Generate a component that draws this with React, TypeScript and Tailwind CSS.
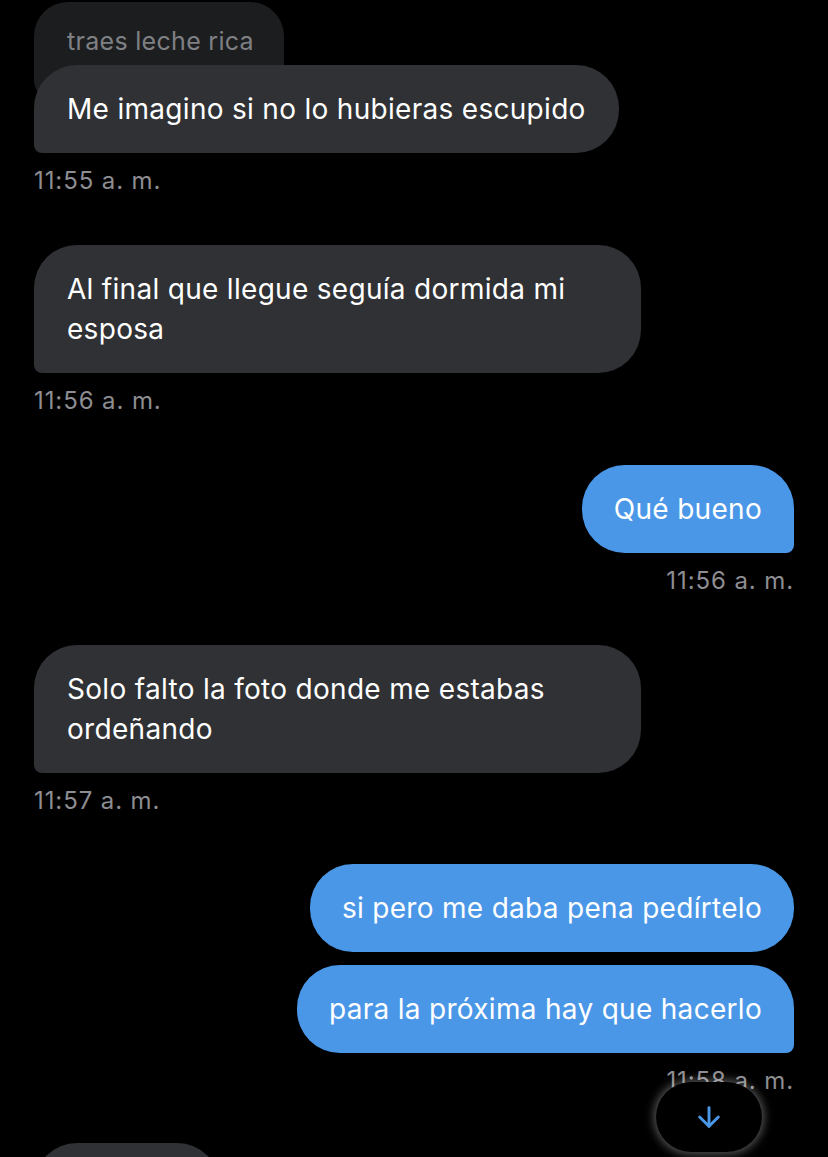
import { ArrowDown } from "lucide-react";

type Msg = { text: string; time?: string; last?: boolean };

function Received({ text, last = true }: Msg) {
  return (
    <div
      className={`w-fit max-w-[607px] bg-[#2f3134] px-[33px] py-[24px] text-[28px] leading-[40px] tracking-[0.3px] text-white rounded-[43px] ${
        last ? "rounded-bl-[8px]" : ""
      }`}
    >
      {text}
    </div>
  );
}

function Sent({ text, last = true }: Msg) {
  return (
    <div
      className={`ml-auto w-fit max-w-[607px] bg-[#4a97e8] px-[32px] py-[24px] text-[28px] leading-[40px] tracking-[0.3px] text-white rounded-[43px] ${
        last ? "rounded-br-[8px]" : ""
      }`}
    >
      {text}
    </div>
  );
}

function Time({ time, right = false }: { time: string; right?: boolean }) {
  return (
    <div
      className={`mt-[14px] text-[24px] leading-[28px] tracking-[0.9px] text-[#8d8d92] ${
        right ? "text-right" : ""
      }`}
    >
      {time}
    </div>
  );
}

export default function App() {
  return (
    <div
      className="relative h-[1157px] w-[828px] overflow-hidden bg-black px-[34px] pt-[2px]"
      style={{ fontFamily: "Inter, 'Noto Sans', sans-serif" }}
    >
      {/* quoted reply */}
      <div className="w-[250px] whitespace-nowrap rounded-t-[34px] rounded-b-[20px] bg-[#1c1d1f] px-[33px] pt-[20px] pb-[40px] text-[25px] leading-[38px] tracking-[0.3px] text-[#7f8084]">
        traes leche rica
      </div>
      <div className="relative -mt-[35px]">
        <Received text="Me imagino si no lo hubieras escupido" />
      </div>
      <Time time="11:55 a. m." />

      <div className="mt-[50px]">
        <Received text="Al final que llegue seguía dormida mi esposa" />
      </div>
      <Time time="11:56 a. m." />

      <div className="mt-[50px]">
        <Sent text="Qué bueno" />
      </div>
      <Time time="11:56 a. m." right />

      <div className="mt-[50px]">
        <Received text="Solo falto la foto donde me estabas ordeñando" />
      </div>
      <Time time="11:57 a. m." />

      <div className="mt-[49px] flex flex-col gap-[13px]">
        <Sent text="si pero me daba pena pedírtelo" last={false} />
        <Sent text="para la próxima hay que hacerlo" />
      </div>
      <Time time="11:58 a. m." right />

      <div className="mt-[48px] h-[87px] w-[186px] rounded-[43px] bg-[#2f3134]" />

      {/* scroll to bottom button */}
      <div className="absolute left-[656px] top-[1082px] flex h-[70px] w-[106px] items-center justify-center rounded-[35px] bg-black shadow-[0_0_10px_2px_rgba(255,255,255,0.35)]">
        <ArrowDown size={32} strokeWidth={2.2} color="#4a97e8" />
      </div>
    </div>
  );
}
